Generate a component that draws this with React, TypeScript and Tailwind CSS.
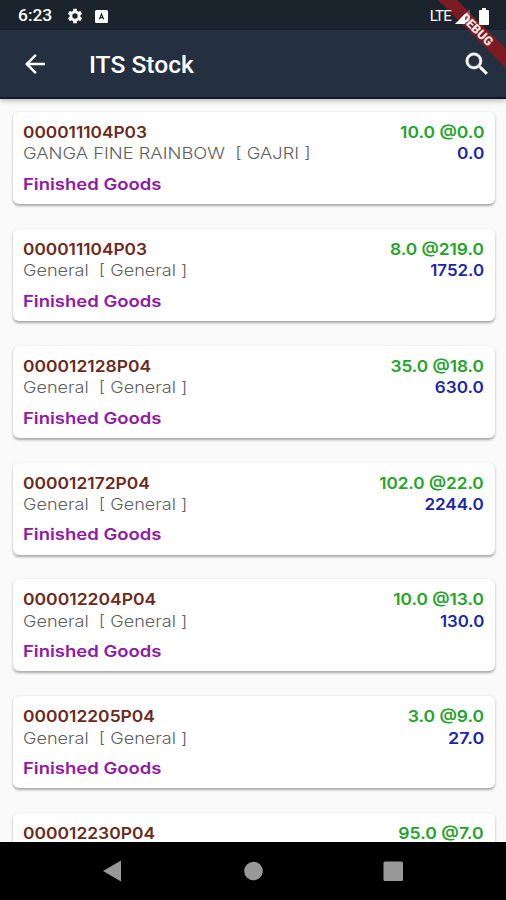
import React from 'react';

interface StockItem {
  code: string;
  name?: string;
  rate: string;
  total?: string;
  category?: string;
  codeWidth: string;
  nameWidth?: string;
  rateWidth: string;
  totalWidth?: string;
}

const general = {
  name: 'General  [ General ]',
  nameWidth: 'scale-x-[1.13]',
  category: 'Finished Goods',
};

const items: StockItem[] = [
  { code: '000011104P03', name: 'GANGA FINE RAINBOW  [ GAJRI ]', rate: '10.0 @0.0', total: '0.0', category: 'Finished Goods', codeWidth: 'scale-x-[1.08]', nameWidth: 'scale-x-[1.145]', rateWidth: 'scale-x-[1.09]', totalWidth: 'scale-x-[1.08]' },
  { ...general, code: '000011104P03', rate: '8.0 @219.0', total: '1752.0', codeWidth: 'scale-x-[1.08]', rateWidth: 'scale-x-[1.08]', totalWidth: 'scale-x-[1.055]' },
  { ...general, code: '000012128P04', rate: '35.0 @18.0', total: '630.0', codeWidth: 'scale-x-[1.09]', rateWidth: 'scale-x-[1.075]', totalWidth: 'scale-x-[1.07]' },
  { ...general, code: '000012172P04', rate: '102.0 @22.0', total: '2244.0', codeWidth: 'scale-x-[1.09]', rateWidth: 'scale-x-[1.07]', totalWidth: 'scale-x-[1.065]' },
  { ...general, code: '000012204P04', rate: '10.0 @13.0', total: '130.0', codeWidth: 'scale-x-[1.095]', rateWidth: 'scale-x-[1.08]', totalWidth: 'scale-x-[1.05]' },
  { ...general, code: '000012205P04', rate: '3.0 @9.0', total: '27.0', codeWidth: 'scale-x-[1.09]', rateWidth: 'scale-x-[1.09]', totalWidth: 'scale-x-[1.12]' },
  { code: '000012230P04', rate: '95.0 @7.0', codeWidth: 'scale-x-[1.09]', rateWidth: 'scale-x-[1.1]' },
];

function StatusBar() {
  return (
    <div className="flex h-[30px] shrink-0 items-center bg-[#1b232d] pl-[18px] pr-[17px] pt-[2px] text-white">
      <span className="w-12 text-[17.4px] font-medium leading-none">6:23</span>
      <svg className="h-[18px] w-[18px]" viewBox="0 0 24 24" fill="currentColor">
        <path d="M19.14 12.94c.04-.3.06-.61.06-.94s-.02-.64-.07-.94l2.03-1.58a.49.49 0 0 0 .12-.61l-1.92-3.32a.49.49 0 0 0-.59-.22l-2.39.96a7 7 0 0 0-1.62-.94l-.36-2.54a.48.48 0 0 0-.48-.41h-3.84a.47.47 0 0 0-.47.41l-.36 2.54c-.59.24-1.13.57-1.62.94l-2.39-.96a.48.48 0 0 0-.59.22L2.74 8.87a.47.47 0 0 0 .12.61l2.03 1.58a7.5 7.5 0 0 0 0 1.88l-2.03 1.58a.49.49 0 0 0-.12.61l1.92 3.32c.12.22.37.29.59.22l2.39-.96c.5.38 1.03.7 1.62.94l.36 2.54c.05.24.24.41.48.41h3.84c.24 0 .44-.17.47-.41l.36-2.54a6.9 6.9 0 0 0 1.62-.94l2.39.96c.22.08.47 0 .59-.22l1.92-3.32a.47.47 0 0 0-.12-.61zM12 15.6a3.6 3.6 0 1 1 0-7.2 3.6 3.6 0 0 1 0 7.2z" />
      </svg>
      <svg className="ml-[11px] h-[13px] w-[13px]" viewBox="0 0 13 13">
        <rect width="13" height="13" rx="1.5" fill="white" />
        <path d="M4.4 9.2 6.5 4l2.1 5.2M5 7.7h3" fill="none" stroke="#1b232d" strokeWidth="1.2" />
      </svg>
      <div className="relative z-30 ml-auto flex items-center">
        <span className="text-[15px] leading-none tracking-[-0.8px]">LTE</span>
        <svg className="ml-[4px] h-[15px] w-[15px]" viewBox="0 0 15 15" fill="white">
          <path d="M15 0v15H0z" fillOpacity="0.25" />
          <path d="M10 5v10H0z" />
        </svg>
        <svg className="ml-[9px] h-[17px] w-[10px]" viewBox="0 0 10 17" fill="white">
          <path d="M3 0h4v2h2a1 1 0 0 1 1 1v13a1 1 0 0 1-1 1H1a1 1 0 0 1-1-1V3a1 1 0 0 1 1-1h2z" />
        </svg>
      </div>
    </div>
  );
}

function AppBar() {
  return (
    <header className="relative z-10 flex h-[69px] shrink-0 items-center border-b-2 border-[#101a27] bg-[#243040] pl-[20px] pr-[14px] text-white shadow-[0_2px_5px_rgba(0,0,0,0.25)]">
      <svg className="h-[30px] w-[30px]" viewBox="0 0 24 24" fill="currentColor">
        <path d="M20 11H7.83l5.59-5.59L12 4l-8 8 8 8 1.41-1.41L7.83 13H20z" />
      </svg>
      <h1 className="ml-[39px] pt-[4px] text-[24.6px] font-medium leading-none">ITS Stock</h1>
      <svg className="ml-auto h-[30px] w-[30px]" viewBox="0 0 24 24" fill="currentColor" stroke="currentColor" strokeWidth="0.4">
        <path d="M15.5 14h-.79l-.28-.27A6.47 6.47 0 0 0 16 9.5 6.5 6.5 0 1 0 9.5 16c1.61 0 3.09-.59 4.23-1.57l.27.28v.79l5 4.99L20.49 19zm-6 0C7.01 14 5 11.99 5 9.5S7.01 5 9.5 5 14 7.01 14 9.5 11.99 14 9.5 14z" />
      </svg>
    </header>
  );
}

function DebugBanner() {
  return (
    <svg className="absolute right-0 top-0 z-20 h-[72px] w-[72px]" viewBox="0 0 72 72">
      <path d="M4 0h19l49 49v19z" fill="#7b1a20" />
      <text x="43" y="34" transform="rotate(45 43 29.5)" textAnchor="middle" fontFamily="Roboto" fontSize="12.5" fontWeight="900" fill="#f3e6e7">
        DEBUG
      </text>
    </svg>
  );
}

function StockCard({ item }: { item: StockItem }) {
  return (
    <li className="h-[92px] shrink-0 rounded-[6px] bg-white pl-[10px] pr-[11px] pt-[10px] text-[16px] leading-[21.4px] shadow-[0_1.5px_2.5px_rgba(0,0,0,0.33)]">
      <div className="flex justify-between font-semibold">
        <span className={`origin-left text-[#6b2a1c] ${item.codeWidth}`}>{item.code}</span>
        <span className={`origin-right text-[#22a42a] ${item.rateWidth}`}>{item.rate}</span>
      </div>
      {item.name && (
        <div className="flex justify-between">
          <span className={`origin-left whitespace-pre font-light text-[#606060] ${item.nameWidth}`}>{item.name}</span>
          <span className={`origin-right font-semibold text-[#1c26a8] ${item.totalWidth}`}>{item.total}</span>
        </div>
      )}
      {item.category && (
        <p className="mt-[9px] w-fit origin-left scale-x-[1.155] font-semibold text-[#9019a8]">{item.category}</p>
      )}
    </li>
  );
}

function NavBar() {
  return (
    <nav className="h-[58px] shrink-0 bg-black">
      <svg className="h-[58px] w-[506px]" viewBox="0 0 506 58" fill="#999">
        <path d="M103 29 121 18.5v21z" />
        <circle cx="253.5" cy="29" r="9.3" />
        <rect x="383.5" y="19.5" width="19.5" height="19.5" rx="1.5" />
      </svg>
    </nav>
  );
}

export default function App() {
  return (
    <div className="relative flex h-[900px] w-[506px] flex-col overflow-hidden bg-[#fafafa] font-[Roboto,sans-serif]">
      <StatusBar />
      <AppBar />
      <ul className="flex min-h-0 flex-1 flex-col gap-[24.85px] overflow-hidden pl-[13px] pr-[11px] pt-[13px] font-[Inter,sans-serif]">
        {items.map((item, i) => (
          <StockCard key={i} item={item} />
        ))}
      </ul>
      <NavBar />
      <DebugBanner />
    </div>
  );
}
